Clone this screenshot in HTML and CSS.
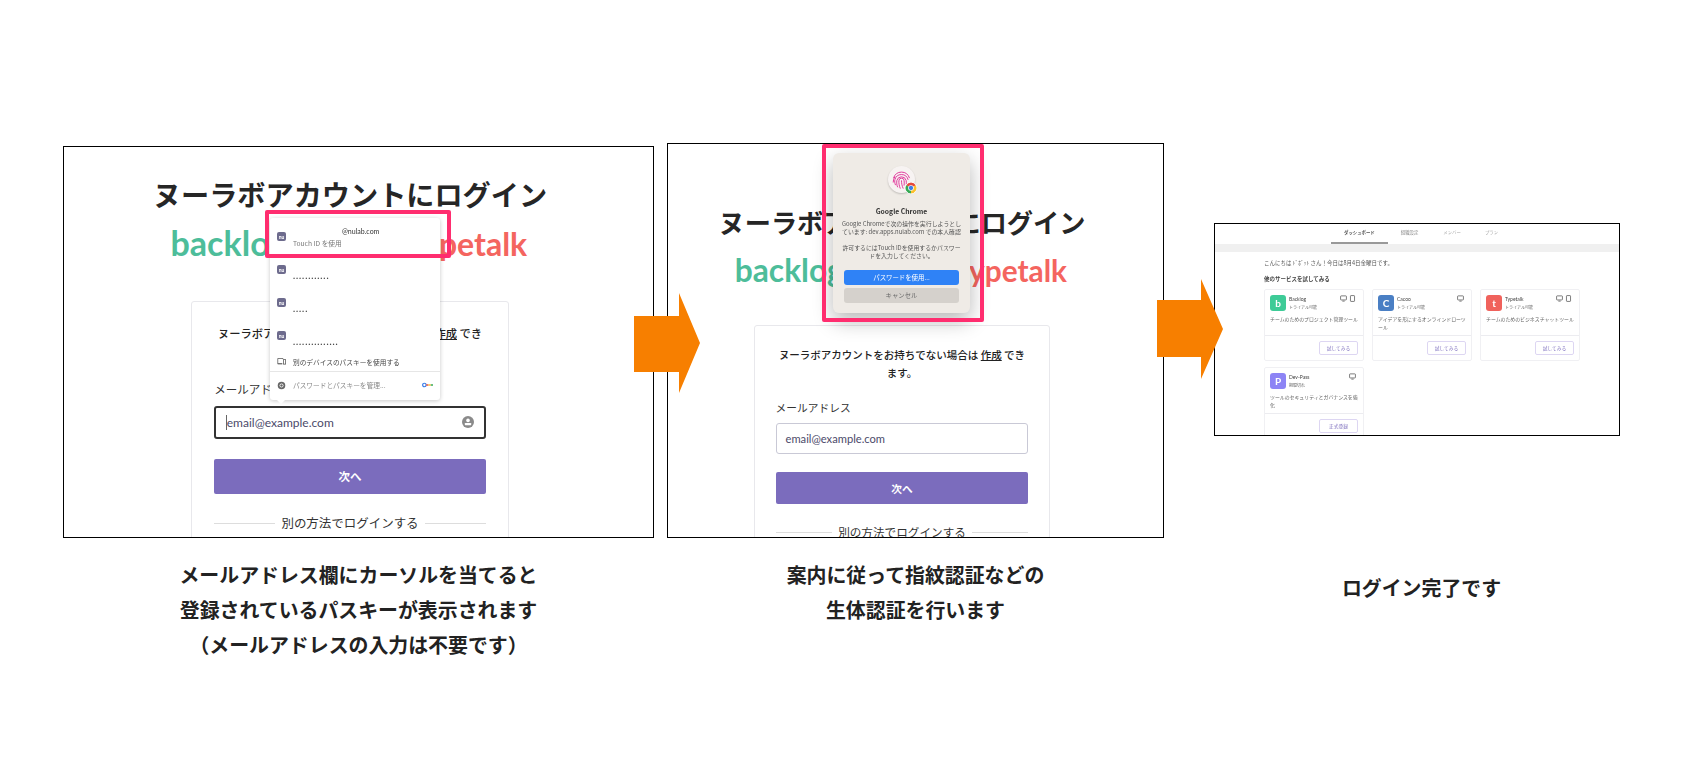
FILE: index.html
```html
<!DOCTYPE html>
<html lang="ja">
  <head>
    <meta charset="UTF-8" />
    <title>パスキーでログイン</title>
    <link rel="stylesheet" href="styles.css">
  </head>
  <body>
    <svg class="defs" width="0" height="0" aria-hidden="true">
      <symbol id="chrome" viewBox="0 0 24 24">
        <path fill="#e5493a" d="M12 12L2.47 6.5A11 11 0 0 1 21.53 6.5Z" />
        <path fill="#fbc02d" d="M12 12L21.53 6.5A11 11 0 0 1 12 23Z" />
        <path fill="#35a853" d="M12 12L12 23A11 11 0 0 1 2.47 6.5Z" />
        <circle cx="12" cy="12" r="5.6" fill="#fff" />
        <circle cx="12" cy="12" r="4.3" fill="#3b7de8" />
      </symbol>
      <symbol id="desktop" viewBox="0 0 12 12">
        <rect x="1" y="1.5" width="10" height="7" rx="1" fill="none" stroke="#555" stroke-width="1.3" />
        <path d="M4 10.500h4" stroke="#555" stroke-width="1.3" />
      </symbol>
      <symbol id="phone" viewBox="0 0 12 12">
        <rect x="2.500" y="1" width="7" height="10" rx="1" fill="none" stroke="#555" stroke-width="1.3" />
      </symbol>
    </svg>

    <main class="page">
      <section class="step step-one">
        <div class="frame frame-one">
          <div class="login">
            <h1 class="login-title">ヌーラボアカウントにログイン</h1>
            <div class="logos">
              <span class="logo-backlog">backlog</span>
              <span class="logo-typetalk">typetalk</span>
            </div>
            <div class="login-card">
              <p class="login-text">ヌーラボアカウントをお持ちでない場合は <u>作成</u> でき<br />ます。</p>
              <label class="login-label">メールアドレス</label>
              <div class="login-input is-focused">
                <span class="caret"></span>email@example.com
                <svg class="input-icon" viewBox="0 0 12 12">
                  <circle cx="6" cy="6" r="6" fill="#8a8a8a" />
                  <circle cx="6" cy="4.400" r="1.800" fill="#fff" />
                  <rect x="2.800" y="7" width="6.400" height="2.200" rx=".6" fill="#fff" />
                </svg>
              </div>
              <div class="login-button">次へ</div>
              <div class="login-divider"><span>別の方法でログインする</span></div>
            </div>
          </div>

          <div class="passkeys">
            <div class="passkey-row">
              <span class="nu-icon">nu</span>
              <div>
                <div class="passkey-name">@nulab.com</div>
                <div class="passkey-sub">Touch ID を使用</div>
              </div>
            </div>
            <div class="passkey-row">
              <span class="nu-icon">nu</span>
              <div>
                <div class="passkey-name"></div>
                <div class="passkey-dots">............</div>
              </div>
            </div>
            <div class="passkey-row">
              <span class="nu-icon">nu</span>
              <div>
                <div class="passkey-name"></div>
                <div class="passkey-dots">.....</div>
              </div>
            </div>
            <div class="passkey-row">
              <span class="nu-icon">nu</span>
              <div>
                <div class="passkey-name"></div>
                <div class="passkey-dots">...............</div>
              </div>
            </div>
            <div class="passkey-other">
              <svg class="row-icon" viewBox="0 0 12 12">
                <path d="M8 3V2H1v7h6M1 9h6" fill="none" stroke="#555" stroke-width="1" />
                <rect x="8.500" y="3.500" width="3" height="6" fill="none" stroke="#555" stroke-width="1" />
              </svg>
              別のデバイスのパスキーを使用する
            </div>
            <div class="passkey-manage">
              <svg class="row-icon" viewBox="0 0 12 12">
                <circle cx="6" cy="6" r="5" fill="#666" />
                <circle cx="6" cy="6" r="2.600" fill="#fff" />
                <circle cx="6" cy="6" r="1.600" fill="#666" />
              </svg>
              <span>パスワードとパスキーを管理...</span>
              <svg class="key-icon" viewBox="0 0 12 6">
                <circle cx="2.600" cy="3" r="1.900" fill="none" stroke="#3b7de8" stroke-width="1.300" />
                <path d="M4.600 2.200h2.400v1.600H4.600z" fill="#e5493a" />
                <path d="M7 2.200h2.600v1.600H7z" fill="#fbc02d" />
                <path d="M9.600 2.200H12v1.600H9.600z" fill="#35a853" />
              </svg>
            </div>
          </div>
          <div class="highlight highlight-passkey"></div>
        </div>
        <p class="caption">メールアドレス欄にカーソルを当てると<br />登録されているパスキーが表示されます<br />（メールアドレスの入力は不要です）</p>
      </section>

      <svg class="arrow arrow-one" viewBox="0 0 66 100">
        <polygon points="0,23 45,23 45,0 66,50 45,100 45,79 0,79" />
      </svg>

      <section class="step step-two">
        <div class="frame frame-two">
          <div class="login">
            <h1 class="login-title">ヌーラボアカウントにログイン</h1>
            <div class="logos">
              <span class="logo-backlog">backlog</span>
              <span class="logo-typetalk">typetalk</span>
            </div>
            <div class="login-card">
              <p class="login-text">ヌーラボアカウントをお持ちでない場合は <u>作成</u> でき<br />ます。</p>
              <label class="login-label">メールアドレス</label>
              <div class="login-input">email@example.com</div>
              <div class="login-button">次へ</div>
              <div class="login-divider"><span>別の方法でログインする</span></div>
            </div>
          </div>

          <div class="touch-dialog">
            <div class="touch-badge">
              <svg class="fingerprint" viewBox="0 0 24 24" fill="none" stroke="#e0359a" stroke-width="1.100" stroke-linecap="round">
                <path d="M3 10a9.500 9.500 0 0 1 18 0" />
                <path d="M2.500 15a10 10 0 0 1 1.800-6" />
                <path d="M5 18c-.8-2-1-4-.5-6a7.800 7.800 0 0 1 15 0" />
                <path d="M7.500 20.500c-1-2-1.200-5-.8-7.500a5.500 5.500 0 0 1 10.600 0c.3 1.500.3 3 .2 4" />
                <path d="M10.500 22c-1-2.500-1.700-5.500-1.500-8.500a3 3 0 0 1 6 0c.2 2 .2 3.500 0 5" />
                <path d="M12 13.500c0 3 .6 6 1.800 8.500" />
              </svg>
              <svg class="badge-chrome"><use href="#chrome" /></svg>
            </div>
            <div class="touch-title">Google Chrome</div>
            <p class="touch-text">Google Chromeで次の操作を実行しようとし<br />ています: dev.apps.nulab.com での本人確認</p>
            <p class="touch-text touch-text-last">許可するにはTouch IDを使用するかパスワー<br />ドを入力してください。</p>
            <div class="touch-button is-primary">パスワードを使用...</div>
            <div class="touch-button">キャンセル</div>
          </div>
          <div class="highlight highlight-touch"></div>
        </div>
        <p class="caption">案内に従って指紋認証などの<br />生体認証を行います</p>
      </section>

      <svg class="arrow arrow-two" viewBox="0 0 66 100">
        <polygon points="0,21 44,21 44,0 66,50 44,100 44,78 0,78" />
      </svg>

      <section class="step step-three">
        <div class="frame frame-three">
          <div class="dash">
            <nav class="dash-nav">
              <span class="dash-tab is-active">ダッシュボード</span>
              <span class="dash-tab">組織設定</span>
              <span class="dash-tab is-muted">メンバー</span>
              <span class="dash-tab is-muted">プラン</span>
            </nav>
            <div class="dash-band"></div>
            <div class="dash-body">
              <p class="dash-greeting">こんにちは ﾄﾞﾎﾞｯﾄ さん！今日は8月4日金曜日です。</p>
              <h2 class="dash-heading">他のサービスを試してみる</h2>
              <div class="dash-grid">
                <article class="service">
                  <div class="service-main">
                    <div class="service-head">
                      <span class="service-logo is-backlog">b</span>
                      <div class="service-names"><b>Backlog</b><small>トライアル可能</small></div>
                      <div class="service-devices">
                        <svg><use href="#desktop" /></svg><svg><use href="#phone" /></svg>
                      </div>
                    </div>
                    <p class="service-desc">チームのためのプロジェクト管理ツール</p>
                  </div>
                  <div class="service-foot"><span class="service-button">試してみる</span></div>
                </article>
                <article class="service">
                  <div class="service-main">
                    <div class="service-head">
                      <span class="service-logo is-cacoo">C</span>
                      <div class="service-names"><b>Cacoo</b><small>トライアル可能</small></div>
                      <div class="service-devices">
                        <svg><use href="#desktop" /></svg>
                      </div>
                    </div>
                    <p class="service-desc">アイデアを形にするオンラインドローツール</p>
                  </div>
                  <div class="service-foot"><span class="service-button">試してみる</span></div>
                </article>
                <article class="service">
                  <div class="service-main">
                    <div class="service-head">
                      <span class="service-logo is-typetalk">t</span>
                      <div class="service-names"><b>Typetalk</b><small>トライアル可能</small></div>
                      <div class="service-devices">
                        <svg><use href="#desktop" /></svg><svg><use href="#phone" /></svg>
                      </div>
                    </div>
                    <p class="service-desc">チームのためのビジネスチャットツール</p>
                  </div>
                  <div class="service-foot"><span class="service-button">試してみる</span></div>
                </article>
                <article class="service">
                  <div class="service-main">
                    <div class="service-head">
                      <span class="service-logo is-devpass">P</span>
                      <div class="service-names"><b>Dev-Pass</b><small>期間切れ</small></div>
                      <div class="service-devices">
                        <svg><use href="#desktop" /></svg>
                      </div>
                    </div>
                    <p class="service-desc">ツールのセキュリティとガバナンスを強化</p>
                  </div>
                  <div class="service-foot"><span class="service-button">正式登録</span></div>
                </article>
              </div>
            </div>
          </div>
        </div>
        <p class="caption caption-three">ログイン完了です</p>
      </section>
    </main>
  </body>
</html>
```

FILE: styles.css
```css
* {
  margin: 0;
  padding: 0;
  box-sizing: border-box;
}

body {
  font-family: "Noto Sans CJK JP", "Noto Sans", sans-serif;
  color: #222;
  background-color: #fff;
}

.defs {
  position: absolute;
}

.page {
  display: flex;
  align-items: flex-start;
  height: 759px;
  padding-left: 63px;
  overflow: hidden;
}

.step-one {
  width: 591px;
  padding-top: 146px;
}

.step-two {
  width: 497px;
  padding-top: 143px;
}

.step-three {
  width: 406px;
  padding-top: 223px;
}

.frame {
  position: relative;
  border: 1px solid #000;
  background: #fff;
  overflow: hidden;
}

.frame-one {
  height: 392px;
  font-size: 16px;
}

.frame-two {
  height: 395px;
  font-size: 14.9px;
}

.frame-three {
  height: 213px;
}

.caption {
  font-size: 19.9px;
  font-weight: 700;
  line-height: 35px;
  text-align: center;
  margin-top: 19px;
}

.step-three .caption {
  margin-top: 134px;
  padding-left: 9px;
}

.arrow {
  flex: none;
  width: 66px;
  height: 100px;
  z-index: 2;
  fill: #f77f00;
}

.arrow-one {
  margin: 293px -33px 0 -20px;
}

.arrow-two {
  margin: 279px -9px 0 -7px;
}

/* login page inside the first two frames, sized in em so it scales */
.login {
  display: flex;
  flex-direction: column;
  align-items: center;
}

.frame-one .login {
  padding: 27px 17px 0 0;
}

.frame-two .login {
  padding: 60px 27px 0 0;
}

.login-title {
  font-size: 1.76em;
  font-weight: 700;
  line-height: 1.39;
  white-space: nowrap;
  color: #262626;
}

.logos {
  display: flex;
  justify-content: space-between;
  align-items: center;
  width: 22.3em;
  height: 2.6em;
  margin-top: 0.735em;
  margin-right: 0.15em;
  font-family: "Lato", sans-serif;
  font-weight: 700;
  line-height: 1;
}

.frame-one .logos {
  margin-top: 0.6em;
}

.logo-backlog {
  font-size: 2.13em;
  color: #4dbd9a;
}

.logo-typetalk {
  font-size: 2em;
  color: #f4655f;
}

.login-card {
  width: 19.9em;
  height: 30em;
  margin-top: 2.3em;
  padding: 1.34em 1.4em 0;
  border: 1px solid #e8e8ec;
  border-radius: 3px;
}

.frame-two .login-card {
  margin-top: 2.35em;
}

.login-text {
  font-size: 0.705em;
  font-weight: 500;
  line-height: 1.702;
  text-align: center;
  white-space: nowrap;
}

.login-label {
  display: block;
  font-size: 0.72em;
  line-height: 1.667;
  margin-top: 1.6em;
  color: #333;
}

.login-input {
  display: flex;
  align-items: center;
  height: 2.75em;
  margin-top: 0.533em;
  padding: 0 0.8em;
  font-family: "Lato", sans-serif;
  font-size: 0.75em;
  color: #4b4a6a;
  border: 1px solid #c9c9d6;
  border-radius: 3px;
}

.login-input.is-focused {
  border: 2px solid #333;
}

.caret {
  width: 1px;
  height: 1.2em;
  background: #666;
}

.input-icon {
  width: 12px;
  height: 12px;
  margin-left: auto;
}

.login-button {
  display: flex;
  align-items: center;
  justify-content: center;
  height: 3.02em;
  margin-top: 1.72em;
  font-size: 0.72em;
  font-weight: 700;
  color: #fff;
  background: #7b6cbd;
  border-radius: 2px;
}

.login-divider {
  display: flex;
  align-items: center;
  gap: 0.5em;
  margin-top: 1.65em;
  font-size: 0.78em;
  line-height: 1.54;
  color: #333;
}

.login-divider::before,
.login-divider::after {
  content: "";
  flex: 1;
  border-top: 1px solid #ddd;
}

/* passkey dropdown */
.passkeys {
  position: absolute;
  left: 206px;
  top: 71px;
  width: 170px;
  height: 182px;
  padding-top: 2px;
  background: #fff;
  border-radius: 3px;
  box-shadow: 0 1px 4px rgba(0, 0, 0, 0.22);
  font-size: 6.7px;
  color: #444;
  filter: blur(0.2px);
}

.passkeys::after {
  content: "";
  position: absolute;
  left: 7px;
  bottom: -4px;
  border-left: 4px solid transparent;
  border-right: 4px solid transparent;
  border-top: 4px solid #fff;
}

.passkey-row {
  display: flex;
  align-items: center;
  gap: 7px;
  height: 33px;
  padding-left: 7px;
}

.nu-icon {
  display: flex;
  align-items: center;
  justify-content: center;
  width: 9px;
  height: 9px;
  font-family: "Lato", sans-serif;
  font-size: 5px;
  font-weight: 700;
  color: #fff;
  background: #6d6b8d;
  border-radius: 2px;
}

.passkey-name {
  height: 12px;
  line-height: 12px;
  padding-left: 49px;
  font-family: "Lato", sans-serif;
  font-size: 7px;
  color: #333;
}

.passkey-sub {
  height: 12px;
  line-height: 12px;
  color: #777;
}

.passkey-dots {
  height: 12px;
  line-height: 12px;
  font-family: "Lato", sans-serif;
  font-size: 9px;
  font-weight: 700;
  letter-spacing: 0.9px;
  color: #444;
}

.passkey-other {
  display: flex;
  align-items: center;
  gap: 7px;
  height: 20px;
  padding-left: 7px;
  border-bottom: 1px solid #e6e6e6;
}

.passkey-manage {
  display: flex;
  align-items: center;
  gap: 7px;
  height: 26px;
  padding: 0 7px;
  color: #888;
}

.row-icon {
  flex: none;
  width: 9px;
  height: 9px;
}

.key-icon {
  width: 11px;
  height: 6px;
  margin-left: auto;
}

.highlight {
  position: absolute;
  border: 4px solid #ff2d6f;
  border-radius: 2px;
}

.highlight-passkey {
  left: 201px;
  top: 63px;
  width: 186px;
  height: 48px;
}

.highlight-touch {
  left: 154px;
  top: 0;
  width: 162px;
  height: 178px;
}

/* macOS Touch ID dialog */
.touch-dialog {
  position: absolute;
  left: 165px;
  top: 9px;
  display: flex;
  flex-direction: column;
  align-items: center;
  width: 137px;
  height: 160px;
  padding-top: 13px;
  background: #efebe6;
  border-radius: 6px;
  box-shadow: 0 8px 20px rgba(0, 0, 0, 0.28);
  font-size: 5.9px;
  color: #555;
  text-align: center;
  line-height: 8px;
  white-space: nowrap;
  filter: blur(0.2px);
}

.touch-badge {
  position: relative;
  width: 27px;
  height: 27px;
  padding: 3px;
  background: #f7f3f2;
  border-radius: 50%;
  box-shadow: 0 1px 2px rgba(0, 0, 0, 0.2);
}

.fingerprint {
  display: block;
  width: 21px;
  height: 21px;
}

.badge-chrome {
  position: absolute;
  right: -2px;
  bottom: -1px;
  width: 12px;
  height: 12px;
  background: #fff;
  border-radius: 50%;
}

.touch-title {
  margin-top: 13px;
  font-size: 6.8px;
  font-weight: 700;
  line-height: 10px;
  color: #333;
}

.touch-text {
  margin-top: 4px;
}

.touch-text-last {
  margin-top: 8px;
}

.touch-button {
  width: 115px;
  height: 15px;
  margin-top: 3px;
  font-size: 6.4px;
  line-height: 15px;
  color: #666;
  background: #d5d1cc;
  border-radius: 3px;
}

.touch-button.is-primary {
  margin-top: 10px;
  color: #fff;
  background: #2f82f6;
}

/* small dashboard screenshot */
.frame-three {
  font-size: 4.9px;
  color: #555;
}

.dash {
  filter: blur(0.35px);
}

.dash-nav {
  display: flex;
  height: 20px;
  padding-left: 116px;
  font-size: 4.4px;
}

.dash-tab {
  padding: 0 13px;
  line-height: 17px;
  color: #888;
}

.dash-tab.is-muted {
  color: #aaa;
  padding: 0 12px;
}

.dash-tab.is-active {
  color: #555;
  font-weight: 700;
  border-bottom: 2px solid #999;
}

.dash-band {
  height: 8px;
  background: #f0f0f0;
}

.dash-body {
  padding: 7px 0 0 49px;
}

.dash-greeting {
  font-size: 5.5px;
  line-height: 8px;
}

.dash-heading {
  margin-top: 8px;
  font-size: 5.5px;
  font-weight: 700;
  line-height: 8px;
  color: #444;
}

.dash-grid {
  display: grid;
  grid-template-columns: 100px 100px 100px;
  gap: 6px 8px;
  margin-top: 6px;
}

.service {
  height: 72px;
  border: 1px solid #f0f0f3;
  border-radius: 2px;
}

.service-main {
  height: 46px;
  padding: 5px 5px 0;
  border-bottom: 1px solid #ececf0;
}

.service-head {
  display: flex;
  gap: 3px;
}

.service-logo {
  display: flex;
  align-items: center;
  justify-content: center;
  width: 16px;
  height: 16px;
  font-family: "Lato", sans-serif;
  font-size: 10px;
  font-weight: 700;
  color: #fff;
  border-radius: 3px;
}

.is-backlog {
  background: #3ecb97;
}

.is-cacoo {
  background: #4a7fc4;
}

.is-typetalk {
  background: #f0625c;
}

.is-devpass {
  background: #8d84f5;
}

.service-names {
  display: flex;
  flex-direction: column;
  flex: 1;
  line-height: 8px;
}

.service-names b {
  font-family: "Lato", sans-serif;
  font-size: 5px;
  font-weight: 400;
  color: #444;
}

.service-names small {
  font-size: 4px;
  color: #666;
}

.service-devices {
  display: flex;
  gap: 2px;
  margin-right: 2px;
}

.service-devices svg {
  width: 7px;
  height: 7px;
}

.service-desc {
  margin-top: 4px;
  line-height: 8px;
  color: #666;
}

.service-foot {
  display: flex;
  justify-content: flex-end;
  padding: 5px 5px 0 0;
}

.service-button {
  width: 39px;
  height: 14px;
  font-size: 4.7px;
  line-height: 12px;
  text-align: center;
  color: #7b6cbd;
  border: 1px solid #ddd6f2;
  border-radius: 2px;
}
```
